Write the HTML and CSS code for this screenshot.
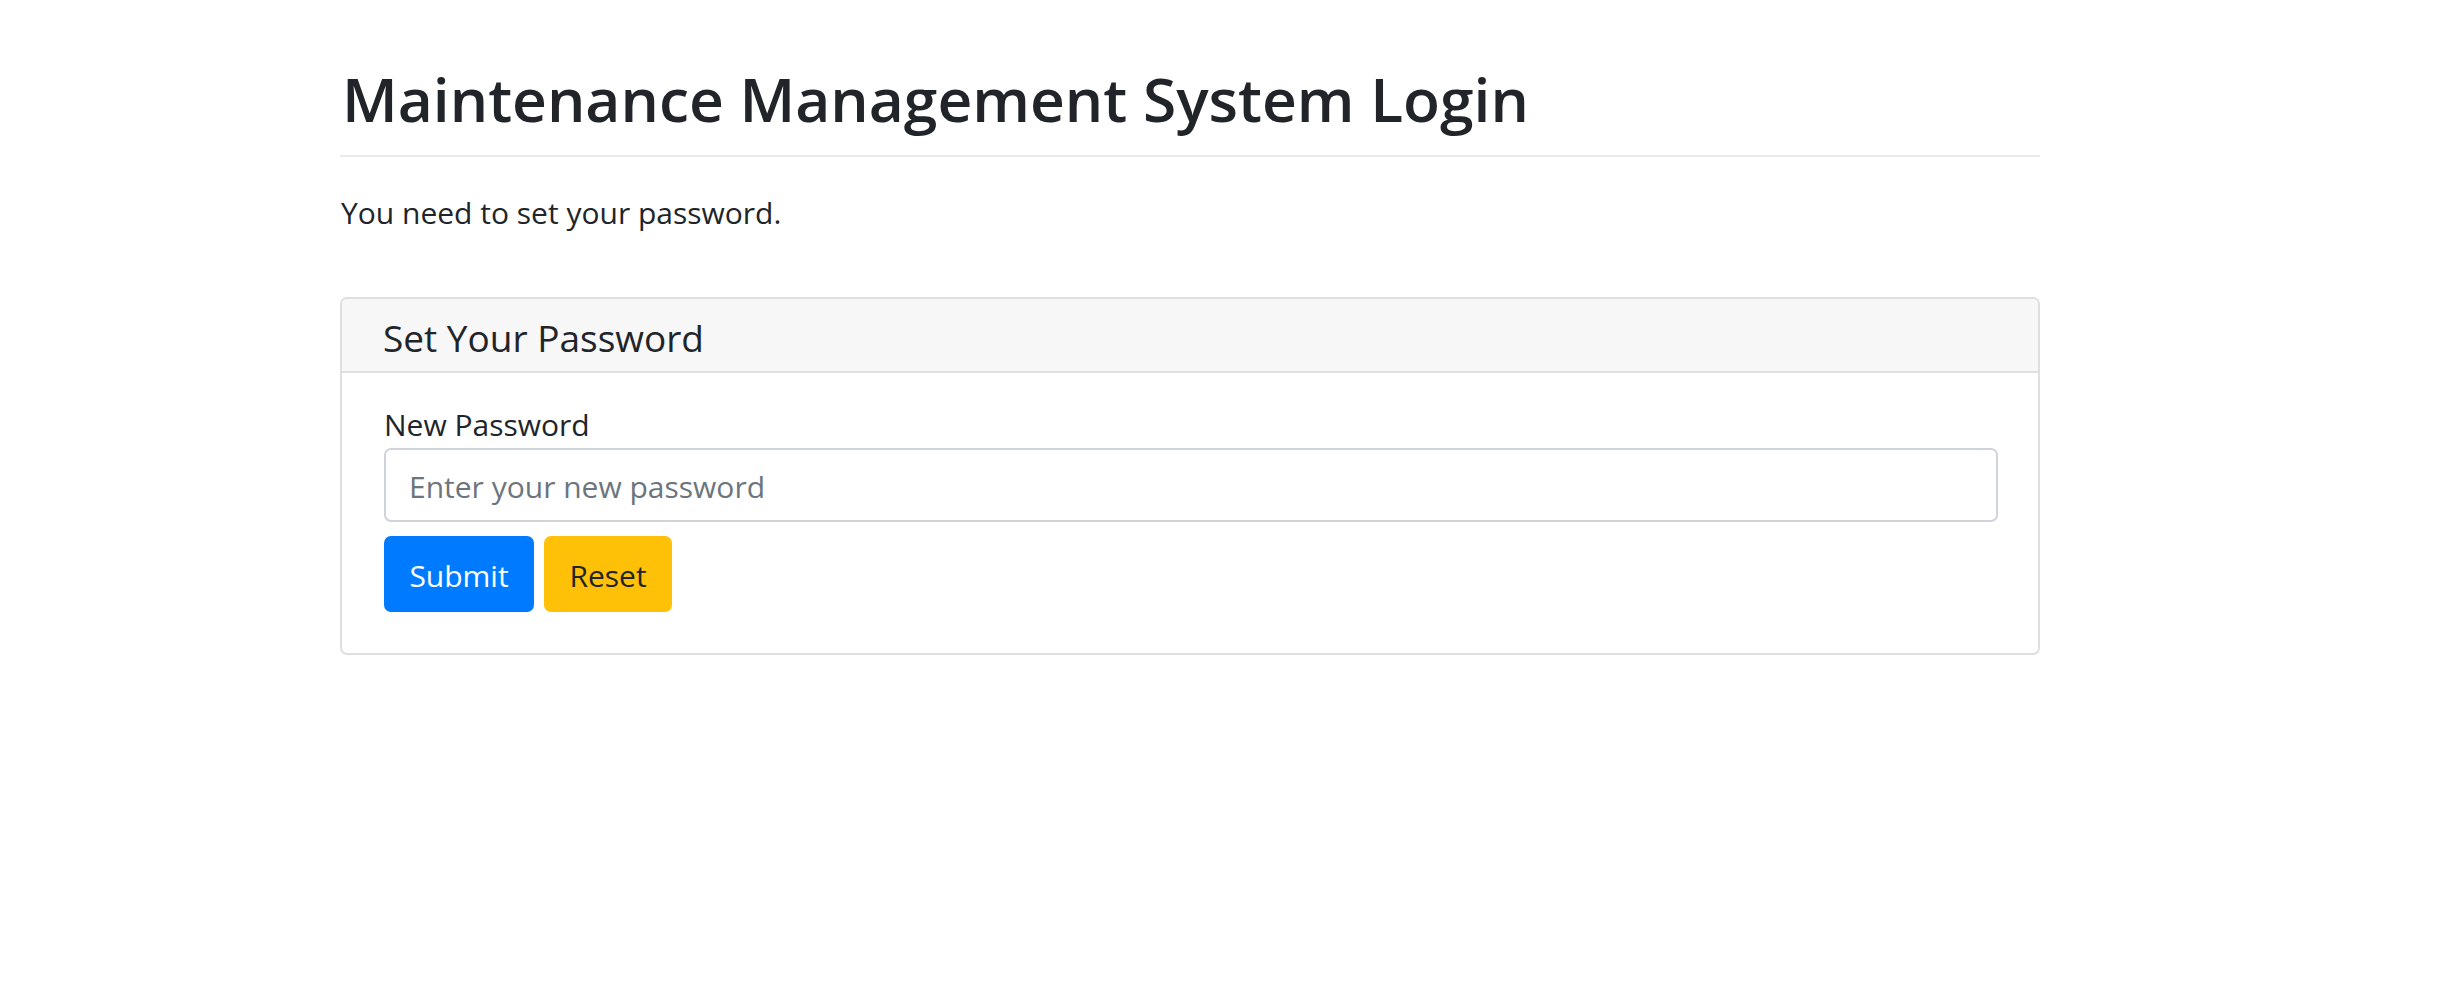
FILE: index.html
```html
<!DOCTYPE html>
<html lang="en">
<head>
<meta charset="utf-8">
<title>Maintenance Management System Login</title>
<link rel="stylesheet" href="styles.css">
</head>
<body>
<main class="page">
  <header class="page-header">
    <h1 class="title">Maintenance Management System Login</h1>
  </header>
  <p class="notice">You need to set your password.</p>
  <section class="card">
    <div class="card-header">
      <h4 class="card-title">Set Your Password</h4>
    </div>
    <div class="card-body">
      <form class="form">
        <label class="label" for="newpw">New Password</label>
        <input class="input" id="newpw" type="password" placeholder="Enter your new password">
        <div class="actions">
          <button type="submit" class="btn btn-submit">Submit</button>
          <button type="reset" class="btn btn-reset">Reset</button>
        </div>
      </form>
    </div>
  </section>
</main>
</body>
</html>
```

FILE: styles.css
```css
html, body {
  margin: 0;
  padding: 0;
  background: #ffffff;
}

body {
  font-family: "Open Sans", "Noto Sans", "Liberation Sans", sans-serif;
  color: #212529;
}

.page {
  width: 1700px;
  margin-left: 340px;
  padding-top: 63px;
}

.page-header {
  border-bottom: 2px solid #e9e9ee;
  padding-bottom: 20px;
}

.title {
  margin: 0 0 0 2px;
  font-size: 60.5px;
  line-height: 72px;
  font-weight: 600;
  color: #212529;
}

.notice {
  margin: 38px 0 0 1px;
  font-size: 30px;
  line-height: 36px;
}

.card {
  margin-top: 66px;
  border: 2px solid #dfdfdf;
  border-radius: 7px;
  overflow: hidden;
}

.card-header {
  background: #f7f7f7;
  border-bottom: 2px solid #dfdfdf;
  padding: 6px 40px 0 41px;
}

.card-title {
  margin: 0;
  font-size: 37px;
  line-height: 66px;
  font-weight: 400;
}

.card-body {
  padding: 34px 40px 41px 42px;
}

.form {
  display: flex;
  flex-direction: column;
}

.label {
  font-size: 30px;
  line-height: 36px;
}

.input {
  margin-top: 5px;
  box-sizing: border-box;
  height: 74px;
  width: 100%;
  border: 2px solid #ced4da;
  border-radius: 7px;
  padding: 3px 23px 0;
  font-family: inherit;
  font-size: 30px;
  color: #495057;
  outline: none;
}

.input::placeholder {
  color: #6c757d;
  opacity: 1;
}

.actions {
  display: flex;
  gap: 10px;
  margin-top: 14px;
}

.btn {
  box-sizing: border-box;
  height: 76px;
  border: none;
  border-radius: 7px;
  padding: 3px 0 0;
  font-family: inherit;
  font-size: 30px;
  text-align: center;
  cursor: pointer;
}

.btn-submit {
  width: 150px;
  background: #007bff;
  color: #ffffff;
}

.btn-reset {
  width: 128px;
  background: #ffc107;
  color: #212529;
}
```
